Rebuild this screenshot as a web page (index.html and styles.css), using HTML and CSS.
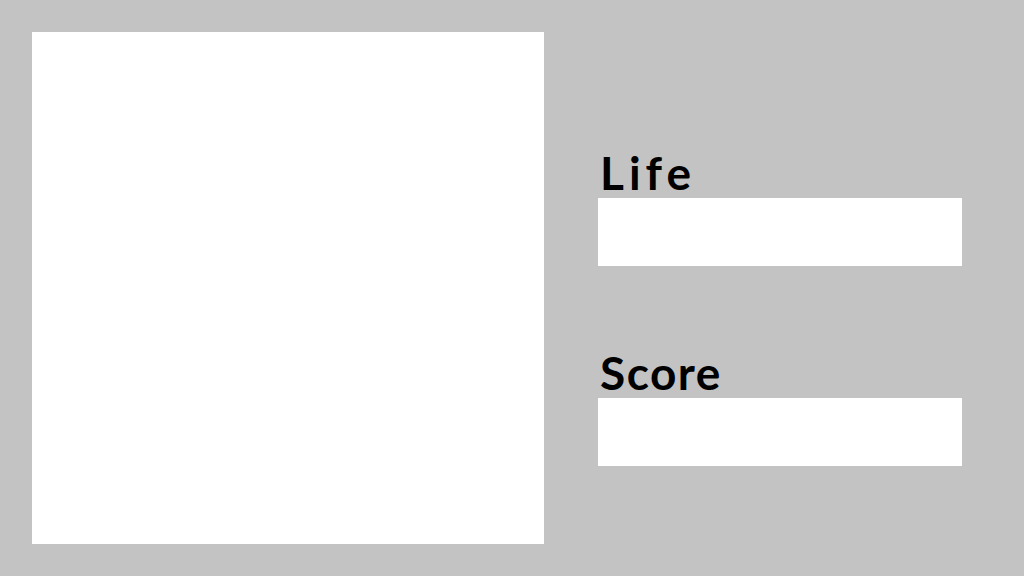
FILE: index.html
```html
<!DOCTYPE html>
<html>
<head>
<meta charset="utf-8">
<link rel="stylesheet" href="styles.css">
</head>
<body>
<div class="screen">
  <div class="board">
    <div class="tile"></div>
    <div class="tile"></div>
    <div class="tile"></div>
    <div class="tile"></div>
  </div>
  <div class="panel">
    <div class="stat">
      <div class="label label-life">Life</div>
      <div class="field"></div>
    </div>
    <div class="stat">
      <div class="label">Score</div>
      <div class="field"></div>
    </div>
  </div>
</div>
</body>
</html>
```

FILE: styles.css
```css
html, body {
  margin: 0;
  padding: 0;
  background: #c3c3c3;
}
.screen {
  width: 1024px;
  height: 576px;
  box-sizing: border-box;
  padding: 32px;
  display: flex;
  align-items: flex-start;
}
.board {
  width: 512px;
  height: 512px;
  display: grid;
  grid-template-columns: 256px 256px;
  grid-template-rows: 256px 256px;
  flex: none;
}
.tile {
  background: #ffffff;
}
.panel {
  margin-left: 54px;
  width: 364px;
  padding-top: 116px;
  display: flex;
  flex-direction: column;
  gap: 82px;
}
.label {
  font-family: Lato, "DejaVu Sans", sans-serif;
  font-weight: 700;
  font-size: 46px;
  line-height: 50px;
  height: 50px;
  letter-spacing: 1.5px;
  color: #000;
  padding-left: 2px;
}
.label-life {
  letter-spacing: 5px;
}
.field {
  height: 68px;
  background: #ffffff;
}
```
